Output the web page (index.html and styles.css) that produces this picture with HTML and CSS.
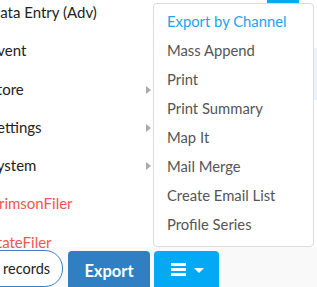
FILE: index.html
```html
<!DOCTYPE html>
<html lang="en">
<head>
  <meta charset="UTF-8" />
  <meta name="viewport" content="width=device-width, initial-scale=1.0"/>
  <title>Records</title>
  <link rel="stylesheet" href="styles.css">
</head>
<body>

  <div class="stage">
    <ul class="nav">
      <li>Data Entry (Adv)</li>
      <li>Event</li>
      <li class="sub">Store</li>
      <li class="sub">Settings</li>
      <li class="sub">System</li>
      <li class="red">CrimsonFiler</li>
      <li class="red">StateFiler</li>
    </ul>

    <div class="behind-btn"></div>
    <div class="behind-strip"></div>

    <ul class="dropdown">
      <li class="active">Export by Channel</li>
      <li>Mass Append</li>
      <li>Print</li>
      <li>Print Summary</li>
      <li>Map It</li>
      <li>Mail Merge</li>
      <li>Create Email List</li>
      <li>Profile Series</li>
    </ul>
  </div>

  <div class="toolbar">
    <button class="pill">records</button>
    <button class="export">Export</button>
    <button class="menu-btn">
      <svg width="15" height="13" viewBox="0 0 15 13">
        <rect x="0" y="0" width="15" height="3" fill="#fff"/>
        <rect x="0" y="5" width="15" height="3" fill="#fff"/>
        <rect x="0" y="10" width="15" height="3" fill="#fff"/>
      </svg>
      <span class="caret"></span>
    </button>
  </div>

</body>
</html>
```

FILE: styles.css
```css
body {
  margin: 0;
  font-family: Lato, "Noto Sans", sans-serif;
  background: #f9f9f9;
  overflow: hidden;
}
.stage {
  position: relative;
  height: 247px;
  background: #fff;
}
.nav {
  list-style: none;
  margin: 0;
  padding: 0;
  position: relative;
  top: -7px;
  margin-left: -11px;
  width: 166px;
}
.nav li {
  height: 38.3px;
  line-height: 38.3px;
  font-size: 15px;
  color: #222;
  position: relative;
}
.nav li.sub::after {
  content: "";
  position: absolute;
  right: 4px;
  top: 16px;
  border-left: 5px solid #aaa;
  border-top: 4px solid transparent;
  border-bottom: 4px solid transparent;
}
.nav li.red { color: #f2564c; }

.behind-btn {
  position: absolute;
  left: 267px;
  top: -10px;
  width: 32px;
  height: 257px;
  background: #05a9f4;
}
.behind-strip {
  position: absolute;
  left: 313px;
  top: 48px;
  width: 10px;
  height: 52px;
  background: #eaf2fb;
}
.dropdown {
  position: absolute;
  left: 153px;
  top: 3px;
  width: 159px;
  height: 239px;
  margin: 0;
  padding: 3px 0 0;
  list-style: none;
  background: #fff;
  border: 1px solid #d9dde0;
  border-radius: 4px;
  box-sizing: content-box;
}
.dropdown li {
  height: 29px;
  line-height: 29px;
  padding-left: 13px;
  font-size: 14.8px;
  color: #555;
}
.dropdown li.active { color: #1aa5f2; }

.toolbar {
  display: flex;
  gap: 4px;
  padding-top: 3px;
  height: 40px;
}
button {
  font-family: Lato, "Noto Sans", sans-serif;
  border: none;
  cursor: pointer;
}
.pill {
  margin-left: -20px;
  width: 83px;
  height: 37px;
  background: #fff;
  border: 1px solid #3a80c2;
  border-radius: 18px;
  font-size: 14.5px;
  color: #222;
  padding-left: 22px;
  text-align: left;
  margin-right: 1px;
}
.export {
  margin-top: 1px;
  width: 82px;
  height: 40px;
  background: #2f7fc2;
  color: #fff;
  font-weight: bold;
  font-size: 16.5px;
  border-radius: 4px 4px 0 0;
  padding-bottom: 2px;
}
.menu-btn {
  margin-top: 1px;
  width: 65px;
  height: 40px;
  background: #03a9f4;
  border-radius: 4px 4px 0 0;
  display: flex;
  align-items: center;
  padding: 0 0 4px 17px;
  gap: 8px;
}
.caret {
  border-top: 5px solid #fff;
  border-left: 5px solid transparent;
  border-right: 5px solid transparent;
  margin-top: 2px;
}
```
